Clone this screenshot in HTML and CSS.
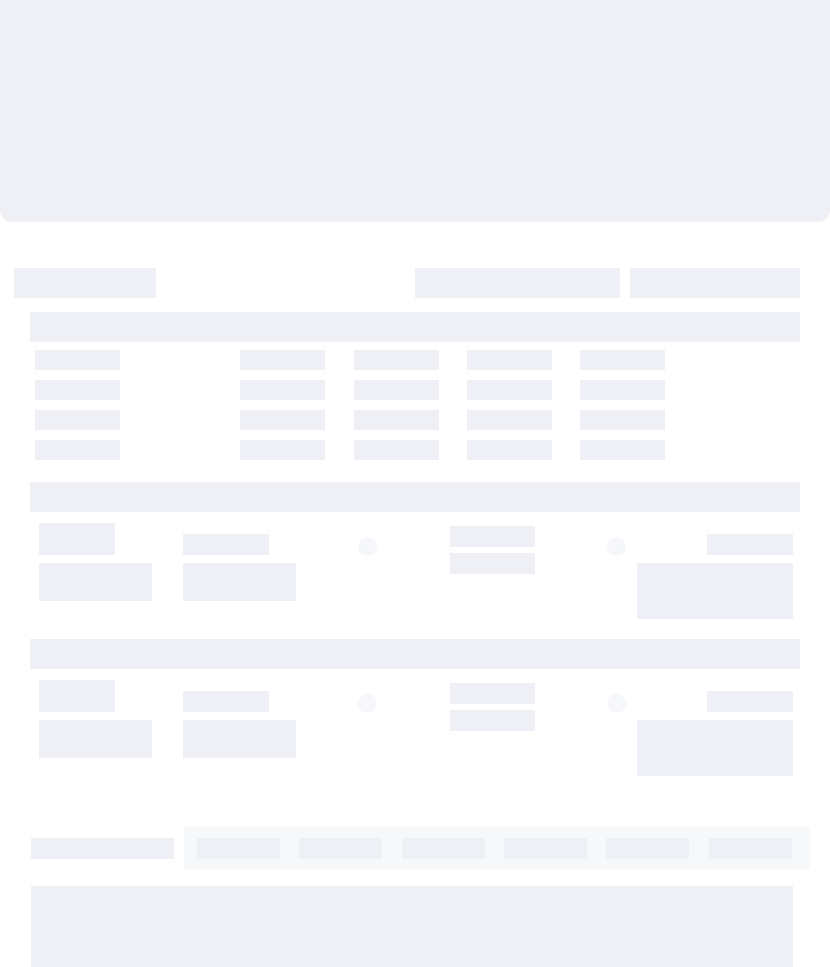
FILE: index.html
```html
<!DOCTYPE html>
<html lang="en">
<head>
<meta charset="utf-8">
<title>Loading</title>
<link rel="stylesheet" href="styles.css">
</head>
<body>
<div class="page">
  <div class="hero"></div>

  <div class="toolbar">
    <div class="sk tb-title"></div>
    <div class="spacer"></div>
    <div class="sk tb-a"></div>
    <div class="sk tb-b"></div>
  </div>

  <div class="section">
    <div class="sk sec-head"></div>
    <div class="table">
      <div class="cell"><div class="sk bar"></div></div><div class="cell"><div class="sk bar"></div></div><div class="cell"><div class="sk bar"></div></div><div class="cell"><div class="sk bar"></div></div><div class="cell"><div class="sk bar"></div></div><div class="cell"></div>
      <div class="cell"><div class="sk bar"></div></div><div class="cell"><div class="sk bar"></div></div><div class="cell"><div class="sk bar"></div></div><div class="cell"><div class="sk bar"></div></div><div class="cell"><div class="sk bar"></div></div><div class="cell"></div>
      <div class="cell"><div class="sk bar"></div></div><div class="cell"><div class="sk bar"></div></div><div class="cell"><div class="sk bar"></div></div><div class="cell"><div class="sk bar"></div></div><div class="cell"><div class="sk bar"></div></div><div class="cell"></div>
      <div class="cell"><div class="sk bar"></div></div><div class="cell"><div class="sk bar"></div></div><div class="cell"><div class="sk bar"></div></div><div class="cell"><div class="sk bar"></div></div><div class="cell"><div class="sk bar"></div></div><div class="cell"></div>
    </div>
  </div>

  <div class="section">
    <div class="sk sec-head"></div>
    <div class="leg">
      <div class="col col-a"><div class="sk a1"></div><div class="sk a2"></div></div>
      <div class="col col-b"><div class="sk b1"></div><div class="sk b2"></div></div>
      <div class="col col-c"><div class="dot"></div></div>
      <div class="col col-d"><div class="sk d1"></div><div class="sk d2"></div></div>
      <div class="col col-c"><div class="dot"></div></div>
      <div class="col col-f"><div class="sk f1"></div><div class="sk f2"></div></div>
    </div>
  </div>

  <div class="section">
    <div class="sk sec-head"></div>
    <div class="leg">
      <div class="col col-a"><div class="sk a1"></div><div class="sk a2"></div></div>
      <div class="col col-b"><div class="sk b1"></div><div class="sk b2"></div></div>
      <div class="col col-c"><div class="dot"></div></div>
      <div class="col col-d"><div class="sk d1"></div><div class="sk d2"></div></div>
      <div class="col col-c"><div class="dot"></div></div>
      <div class="col col-f"><div class="sk f1"></div><div class="sk f2"></div></div>
    </div>
  </div>

  <div class="tabs-row">
    <div class="sk tabs-title"></div>
    <div class="tabs">
      <div class="tab"><div class="sk tab-bar"></div></div>
      <div class="tab"><div class="sk tab-bar"></div></div>
      <div class="tab"><div class="sk tab-bar"></div></div>
      <div class="tab"><div class="sk tab-bar"></div></div>
      <div class="tab"><div class="sk tab-bar"></div></div>
      <div class="tab"><div class="sk tab-bar"></div></div>
    </div>
  </div>

  <div class="sk panel"></div>
</div>
</body>
</html>
```

FILE: styles.css
```css
html, body {
  margin: 0;
  padding: 0;
  background: #ffffff;
  font-family: "Liberation Sans", Arial, sans-serif;
}

.page {
  width: 830px;
  height: 967px;
  overflow: hidden;
}

.sk {
  background: #eff0f5;
}

.hero {
  height: 222px;
  background: #eff0f5;
  border-radius: 0 0 12px 12px;
}

.toolbar {
  display: flex;
  height: 30px;
  margin-top: 46px;
  padding: 0 30px 0 14px;
  gap: 10px;
}
.spacer { flex: 1; }
.tb-title { width: 142px; }
.tb-a { width: 205px; }
.tb-b { width: 170px; }

.section {
  margin: 14px 30px 0;
}
.section + .section { margin-top: 0; }

.sec-head {
  height: 30px;
}

.table {
  display: grid;
  grid-template-columns: 205px 114px 113px 113px 113px 1fr;
  row-gap: 10px;
  margin-top: 8px;
  margin-bottom: 22px;
}
.cell {
  padding: 0 5px;
  height: 20px;
}
.bar {
  width: 85px;
  height: 20px;
}

.leg {
  display: grid;
  grid-template-columns: 144px 175px 92px 157px 30px 156px;
  padding: 11px 7px 20px 9px;
  height: 96px;
  box-sizing: content-box;
}
.col {
  display: flex;
  flex-direction: column;
}
.a1 { width: 76px; height: 32px; }
.a2 { width: 113px; height: 38px; margin-top: 8px; }
.col-b { padding-top: 11px; }
.b1 { width: 86px; height: 21px; }
.b2 { width: 113px; height: 38px; margin-top: 8px; }
.col-c { padding-top: 14px; }
.dot {
  width: 19px;
  height: 19px;
  border-radius: 50%;
  background: #f6f7fa;
}
.col-d { padding-top: 3px; }
.d1 { width: 85px; height: 21px; }
.d2 { width: 85px; height: 21px; margin-top: 6px; }
.col-f { padding-top: 11px; align-items: flex-end; }
.f1 { width: 86px; height: 21px; }
.f2 { width: 156px; height: 56px; margin-top: 8px; }

.tabs-row {
  display: flex;
  align-items: center;
  margin-top: 30px;
  padding-left: 31px;
  gap: 10px;
}
.tabs-title {
  width: 143px;
  height: 21px;
}
.tabs {
  width: 626px;
  height: 44px;
  box-sizing: border-box;
  padding: 0 6px;
  background: #f7f8fa;
  display: grid;
  grid-template-columns: repeat(6, 1fr);
  align-items: center;
}
.tab {
  padding-left: 7px;
}
.tab-bar {
  width: 83px;
  height: 21px;
}

.panel {
  margin: 16px 0 0 31px;
  width: 762px;
  height: 81px;
}
```
